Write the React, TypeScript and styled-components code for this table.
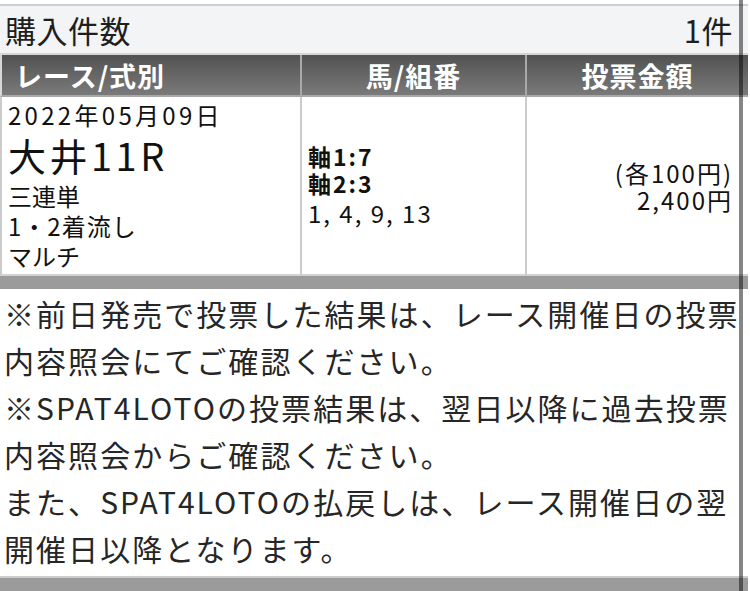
import React from "react";
import styled, { createGlobalStyle } from "styled-components";

const Global = createGlobalStyle`
  html, body { margin: 0; padding: 0; background: #ffffff; }
  body { font-family: "Noto Sans CJK JP", "Noto Sans", sans-serif; color: #222; }
`;

const Page = styled.div`
  position: relative;
  width: 750px;
  height: 591px;
  overflow: hidden;
  padding-top: 4px;
  box-sizing: border-box;
`;

const Frame = styled.div`
  width: 748px;
  display: flex;
  flex-direction: column;
`;

const TitleBar = styled.div`
  display: flex;
  justify-content: space-between;
  align-items: center;
  height: 47px;
  padding: 0 15px 0 5px;
  background: #f2f4f5;
  border-top: 2px solid #cfcfcf;
  border-bottom: 2px solid #d6d6d6;
  font-size: 31px;
  letter-spacing: 0.5px;
  color: #1e1e1e;
  line-height: 1;
`;

const Grid = styled.div`
  display: grid;
  grid-template-columns: 300px 225px 1fr;
`;

const HeadCell = styled.div<{ $align: "left" | "center" }>`
  height: 42px;
  display: flex;
  align-items: center;
  justify-content: ${(p) => (p.$align === "left" ? "flex-start" : "center")};
  padding-left: ${(p) => (p.$align === "left" ? "13px" : "0")};
  background: linear-gradient(#525252, #7a7a7a);
  border-left: 2px solid ${(p) => (p.$align === "left" ? "#d8d8d8" : "#a9a9a9")};
  border-bottom: 2px solid #a8a8a8;
  color: #fff;
  font-weight: 700;
  font-size: 27px;
  letter-spacing: 1px;
  line-height: 1;
  box-sizing: border-box;
`;

const BodyCell = styled.div<{ $align?: "left" | "right" }>`
  height: 179px;
  display: flex;
  flex-direction: column;
  justify-content: center;
  align-items: ${(p) => (p.$align === "right" ? "flex-end" : "flex-start")};
  padding: 0 ${(p) => (p.$align === "right" ? "15px" : "0")} 0 ${(p) => (p.$align === "right" ? "0" : "6px")};
  border-left: 2px solid #cccccc;
  border-bottom: 2px solid #d2d2d2;
  box-sizing: border-box;
  color: #111;
`;

const RaceCell = styled(BodyCell)`
  justify-content: flex-start;
  padding-top: 4px;
`;

const Line = styled.div<{ $size: number; $h: number; $bold?: boolean; $track?: number }>`
  font-size: ${(p) => p.$size}px;
  line-height: ${(p) => p.$h}px;
  font-weight: ${(p) => (p.$bold ? 700 : 400)};
  letter-spacing: ${(p) => p.$track ?? 0}px;
  white-space: nowrap;
`;

const Band = styled.div`
  height: 13px;
  background: #9b9b9b;
`;

const Notes = styled.div`
  padding: 1px 0 0 4px;
  height: 289px;
  box-sizing: border-box;
  border-bottom: 2px solid #cdcdcd;
  font-size: 30px;
  letter-spacing: 2.05px;
  line-height: 47px;
  color: #262626;
`;

const NoteLine = styled.div`
  white-space: nowrap;
`;

const ScrollBar = styled.div`
  position: absolute;
  top: 0;
  bottom: 0;
  left: 739px;
  width: 4px;
  background: rgba(0, 0, 0, 0.48);
`;

export default function App() {
  const notes = [
    "※前日発売で投票した結果は、レース開催日の投票",
    "内容照会にてご確認ください。",
    "※SPAT4LOTOの投票結果は、翌日以降に過去投票",
    "内容照会からご確認ください。",
    "また、SPAT4LOTOの払戻しは、レース開催日の翌",
    "開催日以降となります。",
  ];
  return (
    <>
      <Global />
      <Page>
        <Frame>
          <TitleBar>
            <span>購入件数</span>
            <span>1件</span>
          </TitleBar>
          <Grid>
            <HeadCell $align="left">レース/式別</HeadCell>
            <HeadCell $align="center">馬/組番</HeadCell>
            <HeadCell $align="center">投票金額</HeadCell>
            <RaceCell>
              <Line $size={24} $h={28} $track={3.3}>2022年05月09日</Line>
              <Line $size={38} $h={52} $track={3.5}>大井11R</Line>
              <Line $size={24} $h={30}>三連単</Line>
              <Line $size={24} $h={30} $track={1}>1・2着流し</Line>
              <Line $size={24} $h={30}>マルチ</Line>
            </RaceCell>
            <BodyCell>
              <Line $size={23} $h={27} $bold $track={2}>軸1:7</Line>
              <Line $size={23} $h={27} $bold $track={2}>軸2:3</Line>
              <Line $size={24} $h={32} $track={2}>1, 4, 9, 13</Line>
            </BodyCell>
            <BodyCell $align="right">
              <Line $size={24} $h={27} $track={2}>(各100円)</Line>
              <Line $size={24} $h={27} $track={2}>2,400円</Line>
            </BodyCell>
          </Grid>
          <Band />
          <Notes>
            {notes.map((n, i) => (
              <NoteLine key={i}>{n}</NoteLine>
            ))}
          </Notes>
          <Band />
        </Frame>
        <ScrollBar />
      </Page>
    </>
  );
}
